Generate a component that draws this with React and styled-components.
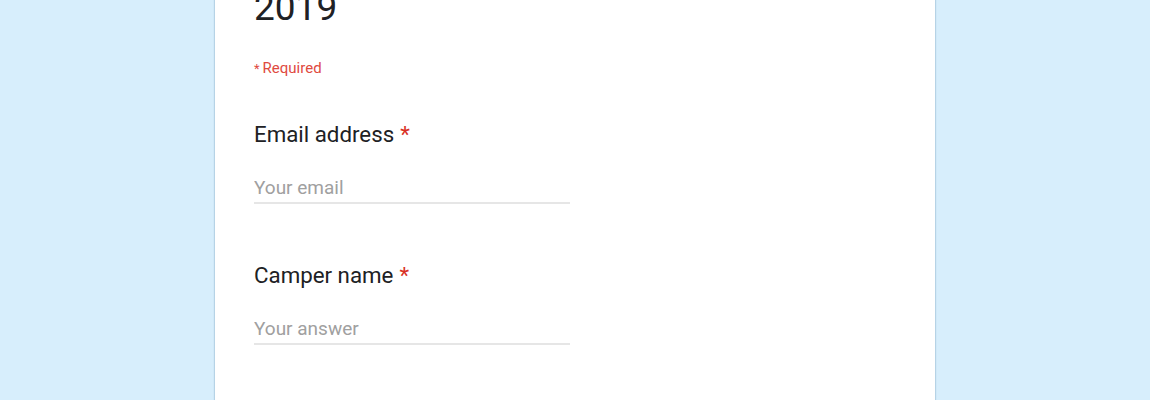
import React from 'react';
import styled, { createGlobalStyle } from 'styled-components';

const GlobalStyle = createGlobalStyle`
    html, body {
        margin: 0;
        padding: 0;
        height: 100%;
        overflow: hidden;
        background: #d7eefc;
    }
    body {
        font-family: Roboto, "Noto Sans", Arial, sans-serif;
    }
`;

const questions = [
    { label: 'Email address', placeholder: 'Your email' },
    { label: 'Camper name', placeholder: 'Your answer' },
];

const App = () => {
    return (
        <>
            <GlobalStyle />
            <Page>
                <Card>
                    <Title>Camp Registration 2019</Title>
                    <RequiredNote>
                        <SmallStar>*</SmallStar>Required
                    </RequiredNote>
                    {questions.map((q) => (
                        <Question key={q.label}>
                            <Label>
                                {q.label}
                                <Star>*</Star>
                            </Label>
                            <Input type="text" placeholder={q.placeholder} />
                        </Question>
                    ))}
                </Card>
            </Page>
        </>
    );
};

export default App;

const Page = styled.div`
    display: flex;
    justify-content: center;
    min-height: 100vh;
`;

const Card = styled.div`
    width: 720px;
    margin-top: -126px;
    padding: 24px 39px 40px;
    box-sizing: border-box;
    background: #fff;
    box-shadow: 0 0 1px 1px rgba(120, 160, 190, 0.35);
    min-height: 700px;
`;

const Title = styled.h1`
    font-size: 37px;
    font-weight: 400;
    line-height: 44px;
    color: #202124;
    margin: 0;
    width: 120px;
`;

const RequiredNote = styled.div`
    margin-top: 28px;
    font-size: 15px;
    line-height: 20px;
    color: #e04a3f;
`;

const SmallStar = styled.span`
    font-size: 13px;
    margin-right: 3px;
`;

const Question = styled.div`
    margin-top: 41px;
    & + & {
        margin-top: 57px;
    }
`;

const Label = styled.div`
    font-size: 22.3px;
    color: #202124;
    line-height: 28px;
`;

const Star = styled.span`
    color: #d93025;
    margin-left: 6px;
`;

const Input = styled.input`
    display: block;
    margin-top: 28px;
    width: 316px;
    height: 28px;
    box-sizing: border-box;
    border: none;
    border-bottom: 2px solid #e6e6e6;
    padding: 0 0 3px;
    font-family: Roboto, "Noto Sans", Arial, sans-serif;
    font-size: 19px;
    line-height: 24px;
    color: #202124;
    outline: none;
    background: transparent;
    &::placeholder {
        color: #a0a0a0;
    }
`;
